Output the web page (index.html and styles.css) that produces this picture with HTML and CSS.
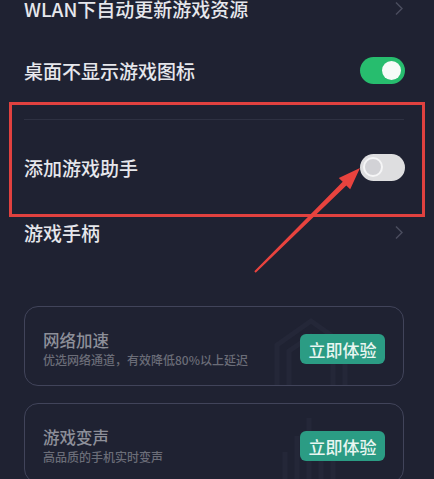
FILE: index.html
```html
<!DOCTYPE html>
<html lang="zh-CN">
<head>
  <meta charset="UTF-8" />
  <meta name="viewport" content="width=device-width, initial-scale=1.0"/>
  <title>游戏设置</title>
  <link rel="stylesheet" href="styles.css">
</head>
<body>
  <main class="list">
    <div class="row">
      <span>WLAN下自动更新游戏资源</span>
      <svg class="chevron" viewBox="0 0 8 14"><path d="M1 1l6 6-6 6" /></svg>
    </div>
    <div class="row">
      <span>桌面不显示游戏图标</span>
      <span class="switch on"><span class="knob"></span></span>
    </div>
    <div class="divider"></div>
    <div class="row row-helper">
      <span>添加游戏助手</span>
      <span class="switch off"><span class="knob"></span></span>
    </div>
    <div class="row row-pad">
      <span>游戏手柄</span>
      <svg class="chevron" viewBox="0 0 8 14"><path d="M1 1l6 6-6 6" /></svg>
    </div>

    <section class="cards">
      <div class="card">
        <svg class="watermark" viewBox="0 0 80 72"><path d="M6 72V30L40 6l34 24v42M18 72V36l22-15 22 15v36" /></svg>
        <div class="card-text">
          <h3>网络加速</h3>
          <p>优选网络通道，有效降低80%以上延迟</p>
        </div>
        <button>立即体验</button>
      </div>
      <div class="card">
        <svg class="watermark" viewBox="0 0 80 72"><path d="M14 72V40M26 72V24M38 72V6M50 72V30M62 72V44" /></svg>
        <div class="card-text">
          <h3>游戏变声</h3>
          <p>高品质的手机实时变声</p>
        </div>
        <button>立即体验</button>
      </div>
    </section>
  </main>

  <!-- annotation drawn over the screenshot -->
  <div class="mark-box"></div>
  <svg class="mark-arrow" viewBox="0 0 434 479">
    <polygon points="254.3,271.3 342.7,181.8 338.8,178 360,168 350.2,189.2 346.3,185.4 255.7,272.7" />
  </svg>
</body>
</html>
```

FILE: styles.css
```css
body {
  margin: 0;
  background: #1f2232;
  font-family: 'Noto Sans CJK SC', 'Noto Sans', sans-serif;
  color: #e6e7ec;
  position: relative;
  height: 479px;
  overflow: hidden;
}

.list {
  margin-top: -23px;
}

.row {
  height: 62px;
  display: flex;
  align-items: center;
  justify-content: space-between;
  padding: 0 29px 0 24px;
  font-size: 19px;
  font-weight: 500;
}

.row-helper {
  margin-top: 15px;
  height: 64px;
}

.row-pad {
  margin-top: 2px;
}

.chevron {
  width: 8px;
  height: 15px;
  margin-right: 2px;
  fill: none;
  stroke: #4a4d5e;
  stroke-width: 1.5;
}

.divider {
  margin: 18px 30px 0 24px;
  height: 1px;
  background: #2e3142;
}

.switch {
  width: 45px;
  height: 27px;
  border-radius: 14px;
  display: flex;
  align-items: center;
  padding: 0 4px;
  box-sizing: border-box;
}

.switch .knob {
  width: 19px;
  height: 19px;
  border-radius: 50%;
}

.switch.on {
  background: #27bd6e;
  justify-content: flex-end;
}

.switch.on .knob {
  background: #f6fbf8;
}

.switch.off {
  background: #dedee0;
  padding: 0 3px;
}

.switch.off .knob {
  width: 20px;
  height: 20px;
  background: #d2d2d6;
  border: 2.5px solid #f5f5f6;
  box-sizing: border-box;
}

.cards {
  margin-top: 43px;
  padding: 0 30px 0 24px;
  display: flex;
  flex-direction: column;
  gap: 17px;
}

.card {
  position: relative;
  height: 80px;
  box-sizing: border-box;
  border: 1.5px solid #41445a;
  border-radius: 14px;
  padding: 6px 18px 0 18px;
  display: flex;
  align-items: center;
  justify-content: space-between;
  overflow: hidden;
}

.watermark {
  position: absolute;
  right: 52px;
  top: 8px;
  width: 80px;
  height: 72px;
  fill: none;
  stroke: #242738;
  stroke-width: 5;
}

.card-text,
.card button {
  position: relative;
}

.card h3 {
  margin: 0;
  font-size: 16.5px;
  font-weight: 500;
  line-height: 22px;
  color: #8d8f99;
}

.card p {
  margin: 0;
  font-size: 12px;
  font-weight: 500;
  line-height: 18px;
  color: #6b6d78;
}

.card button {
  background: #2b9c84;
  color: #e9f6f1;
  border: none;
  border-radius: 6px;
  width: 85px;
  height: 30px;
  padding: 0;
  font-family: inherit;
  font-size: 17px;
  font-weight: 500;
}

.mark-box {
  position: absolute;
  left: 9px;
  top: 102px;
  width: 416px;
  height: 115px;
  box-sizing: border-box;
  border: 3px solid #e0413f;
}

.mark-arrow {
  position: absolute;
  left: 0;
  top: 0;
  width: 434px;
  height: 479px;
  fill: #e8433e;
}
```
